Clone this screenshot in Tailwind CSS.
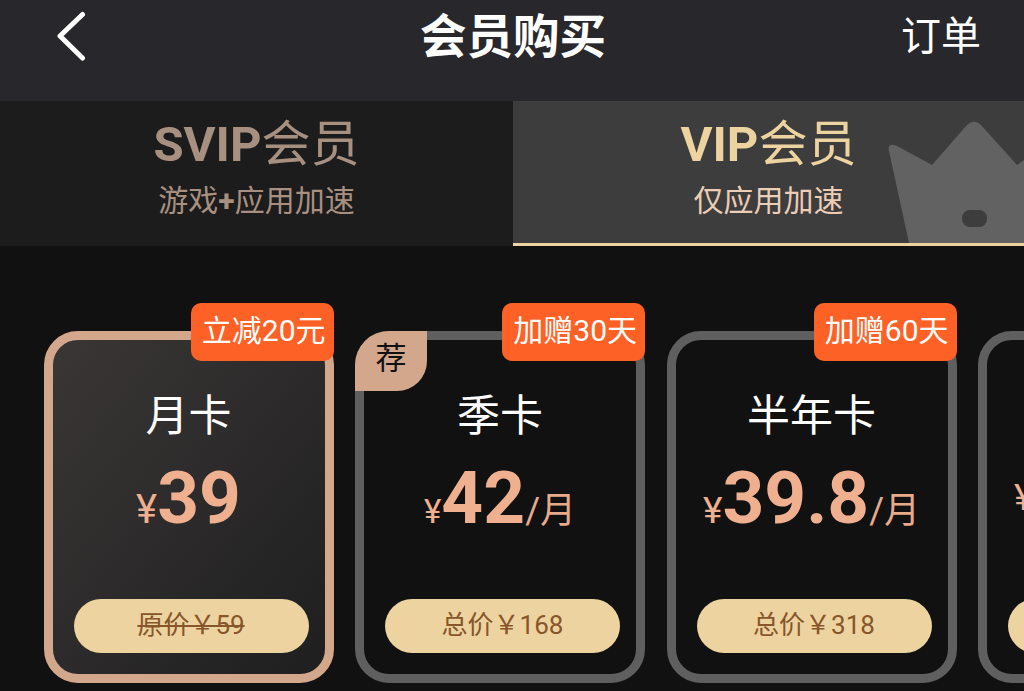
<!doctype html>
<html>
<head>
  <meta charset="UTF-8">
  <meta name="viewport" content="width=device-width, initial-scale=1.0">
  <script src="https://cdn.jsdelivr.net/npm/@tailwindcss/browser@4"></script>
</head>
<body class="w-[1024px] h-[691px] overflow-hidden bg-[#111111] font-['Roboto','Noto_Sans_CJK_SC',sans-serif]">
  <header class="h-[101px] bg-[#27272c] relative flex items-start justify-center text-white">
    <svg class="absolute left-[55px] top-[11px]" width="32" height="50" viewBox="0 0 32 50" fill="none">
      <path d="M27.5 3.5 L5 25 L27.5 47" stroke="#ffffff" stroke-width="5" stroke-linecap="round" stroke-linejoin="round"/>
    </svg>
    <h1 class="ml-[2px] text-[46.5px] leading-[74px] font-bold">会员购买</h1>
    <span class="absolute left-[901px] top-0 text-[40px] leading-[74px]">订单</span>
  </header>

  <nav class="flex h-[145px]">
    <div class="w-[513px] bg-[#1c1c1c] flex flex-col items-center">
      <div class="text-[49px] leading-[58px] mt-[15px] text-[#a89080]"><b class="font-bold">SVIP</b>会员</div>
      <div class="text-[30px] leading-[40px] mt-[7px] text-[#a89080]">游戏<b class="font-bold">+</b>应用加速</div>
    </div>
    <div class="relative flex-1 overflow-hidden bg-[#3d3d3d] border-b-[3px] border-[#edd39f] flex flex-col items-center">
      <svg class="absolute left-0 top-0" width="511" height="142" viewBox="0 0 511 142">
        <path d="M376 50 Q374 41 384 45 L419 64 L454 24 Q461 17 468 24 L504 64 L511 59 L511 142 L396 142 Z" fill="#626262"/>
        <rect x="449" y="109" width="25" height="17" rx="8" fill="#3d3d3d"/>
      </svg>
      <div class="relative text-[49px] leading-[58px] mt-[15px] text-[#edd39f]"><b class="font-bold">VIP</b>会员</div>
      <div class="relative text-[30px] leading-[40px] mt-[7px] text-[#eccdb6]">仅应用加速</div>
    </div>
  </nav>

  <section class="flex gap-[21.5px] pl-[43.5px] pt-[85px]">
    <article class="relative shrink-0 w-[290px] h-[352px] rounded-[34px] border-[9px] border-[#d3a78c] bg-gradient-to-br from-[#3a3636] to-[#1f1f1f] flex flex-col items-center">
      <span class="absolute right-[-9px] top-[-37px] h-[58px] pl-[11px] pr-[8px] rounded-[10px] bg-[#fd6126] text-white text-[30px] leading-[56px]">立减20元</span>
      <div class="text-[43px] leading-[60px] mt-[46px] text-white">月卡</div>
      <div class="flex items-baseline mt-[7px] text-[#efb08f] leading-[90px]"><span class="text-[40px]">¥</span><span class="text-[73px] font-bold">39</span></div>
      <div class="mt-auto mb-[21px] self-start ml-[21px] w-[235px] h-[54px] rounded-full bg-[#edd39f] text-[#87562a] text-[26px] leading-[52px] text-center line-through">原价￥59</div>
    </article>

    <article class="relative shrink-0 w-[290px] h-[352px] rounded-[34px] border-[9px] border-[#5f5f5f] bg-[#111111] flex flex-col items-center">
      <span class="absolute right-[-9px] top-[-37px] h-[58px] pl-[11px] pr-[8px] rounded-[10px] bg-[#fd6126] text-white text-[30px] leading-[56px]">加赠30天</span>
      <span class="absolute left-[-9px] top-[-9px] w-[72px] h-[60px] rounded-tl-[34px] rounded-br-[30px] bg-[#d3a78c] text-[#111111] text-[31px] leading-[56px] text-center">荐</span>
      <div class="text-[43px] leading-[60px] mt-[46px] text-white">季卡</div>
      <div class="flex items-baseline mt-[7px] text-[#efb08f] leading-[90px]"><span class="text-[33px]">¥</span><span class="text-[73px] font-bold">42</span><span class="text-[36px] text-[#e8ab8a]">/月</span></div>
      <div class="mt-auto mb-[21px] self-start ml-[21px] w-[235px] h-[54px] rounded-full bg-[#edd39f] text-[#87562a] text-[26px] leading-[52px] text-center">总价￥168</div>
    </article>

    <article class="relative shrink-0 w-[290px] h-[352px] rounded-[34px] border-[9px] border-[#5f5f5f] bg-[#111111] flex flex-col items-center">
      <span class="absolute right-[-9px] top-[-37px] h-[58px] pl-[11px] pr-[8px] rounded-[10px] bg-[#fd6126] text-white text-[30px] leading-[56px]">加赠60天</span>
      <div class="text-[43px] leading-[60px] mt-[46px] text-white">半年卡</div>
      <div class="flex items-baseline mt-[7px] text-[#efb08f] leading-[90px]"><span class="text-[37px]">¥</span><span class="text-[73px] font-bold">39.8</span><span class="text-[36px] text-[#e8ab8a]">/月</span></div>
      <div class="mt-auto mb-[21px] self-start ml-[21px] w-[235px] h-[54px] rounded-full bg-[#edd39f] text-[#87562a] text-[26px] leading-[52px] text-center">总价￥318</div>
    </article>

    <article class="relative shrink-0 w-[290px] h-[352px] rounded-[34px] border-[9px] border-[#5f5f5f] bg-[#111111] flex flex-col items-center">
      <div class="h-[60px] mt-[46px]"></div>
      <div class="flex items-baseline mt-[7px] text-[#efb08f] leading-[90px] self-start ml-[27px]"><span class="text-[37px]">¥</span></div>
      <div class="mt-auto mb-[21px] self-start ml-[21px] w-[235px] h-[54px] rounded-full bg-[#edd39f]"></div>
    </article>
  </section>
</body>
</html>
